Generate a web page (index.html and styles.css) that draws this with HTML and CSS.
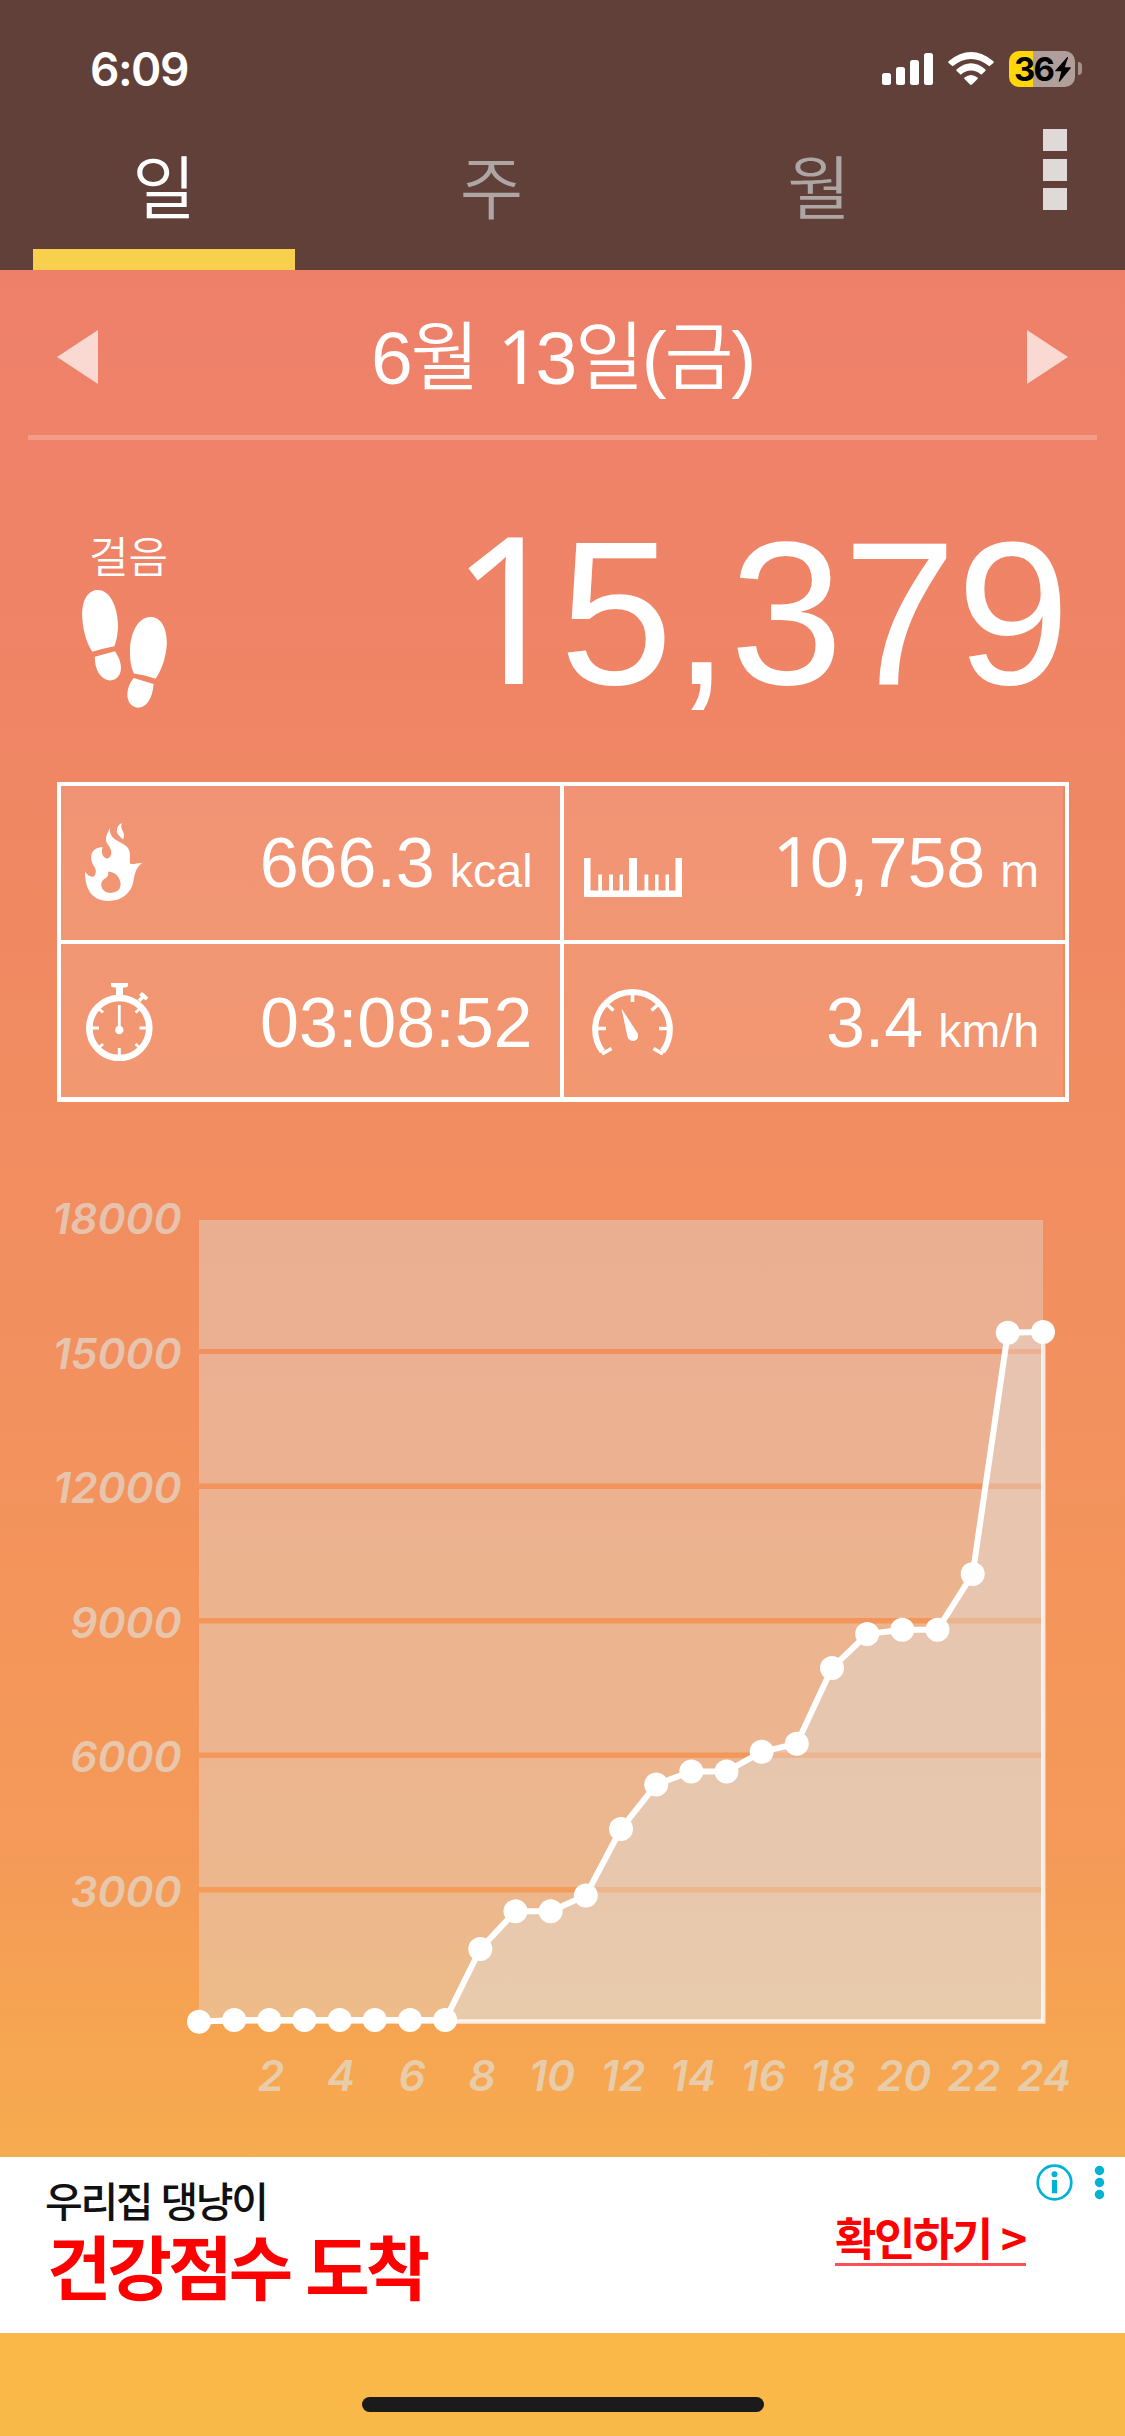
FILE: index.html
```html
<!DOCTYPE html>
<html lang="ko">
<head>
<meta charset="utf-8">
<title>만보기</title>
<link rel="stylesheet" href="styles.css">
</head>
<body>
<div class="app">
  <header class="header">
    <div class="status">
      <span class="clock">6:09</span>
      <div class="status-icons">
        <svg class="signal" viewBox="0 0 51 32"><rect x="0" y="20" width="9" height="12" rx="2.5"/><rect x="14" y="14" width="9" height="18" rx="2.5"/><rect x="28" y="7" width="9" height="25" rx="2.5"/><rect x="42" y="0" width="9" height="32" rx="2.5"/></svg>
        <svg class="wifi" viewBox="0 0 46 33"><path d="M0.6 9.2Q-.2 10 .6 10.900L4.600 14.300Q23 -.500 41.400 14.300L45.400 10.900Q46.200 10 45.400 9.200Q23 -9 .6 9.200Z"/><path d="M8.500 17.500Q8 18.200 8.700 18.900L12.700 22.700Q23 14.500 33.300 22.700L37.300 18.900Q38 18.200 37.500 17.500Q23 5 8.500 17.500Z"/><path d="M16.500 25.600Q23 20.500 29.500 25.600Q30.200 26.300 29.500 27L24 32.400Q23 33.200 22 32.400L16.500 27Q15.800 26.300 16.500 25.600Z"/></svg>
        <div class="battery"><span class="battery-level">36</span><svg class="bolt" viewBox="0 0 16 25"><path d="M12.300 0L.3 13.400Q-.2 14.300.8 14.300H6.400L3.700 24.300Q4 25.200 4.900 24.500L15.700 11.200Q16.200 10.200 15.200 10.200H9.700L13.100.6Q13 -.4 12.300 0Z"/></svg></div>
        <i class="battery-cap"></i>
      </div>
    </div>
    <nav class="tabs">
      <a class="tab active">일</a><a class="tab">주</a><a class="tab">월</a>
      <div class="menu"><i></i><i></i><i></i></div>
    </nav>
  </header>

  <section class="date-bar">
    <svg class="arrow" viewBox="0 0 41 54"><path d="M0 27L41 0V54Z"/></svg>
    <h1 class="date">6월 <span class="one">1</span>3일(금)</h1>
    <svg class="arrow" viewBox="0 0 41 54"><path d="M41 27L0 0V54Z"/></svg>
  </section>

  <section class="steps">
    <div class="steps-label">
      <span>걸음</span>
      <svg class="feet" viewBox="126 270 255 355"><path d="M157 456C137 428 126 380 126 340C127 292 148 270 173 270C212 270 234 325 234 378C233 405 229 424 223 439Q190 445 157 456ZM164 471L225 454C237 472 243 488 243 505C242 528 229 542 210 542C181 540 164 510 164 471ZM282 521C272 500 270 480 270 455C270 397 296 351 331 351C363 351 381 382 381 430C378 475 365 512 347 537Q314 525 282 521ZM281 535L341 553C338 596 320 624 294 624C273 622 262 606 262 583C263 563 270 549 281 535Z"/></svg>
    </div>
    <strong class="steps-count"><span class="one">1</span>5,379</strong>
  </section>

  <section class="stats">
    <div class="stat">
      <svg class="flame" viewBox="131 160 165 233" preserveAspectRatio="none"><path fill-rule="evenodd" d="M203 176C201 207 224 211 246 226C267 240 260 262 261 281C273 286 283 277 296 280C279 292 275 310 271 335C264 372 236 393 199 393C157 393 131 366 131 305C139 318 153 327 160 315C170 292 148 290 149 260C150 242 165 233 182 232C176 252 184 267 198 266C213 257 207 237 198 226C185 209 195 193 203 176ZM198 305C202 330 178 322 178 346C180 362 192 369 206 369C224 368 235 358 234 341C232 321 219 307 198 305Z"/><path d="M238 160C229 181 252 187 241 209C231 199 223 193 223 183C223 173 229 164 238 160Z"/></svg>
      <p class="value">666.3<small>kcal</small></p>
    </div>
    <div class="stat right">
      <svg class="ruler" viewBox="0 0 98 39"><path d="M0 0H6.500V32.500H14.300V16.500H18V32.500H25V16.500H29V32.500H35.500V16.500H39V32.500H45V0H53V32.500H60.500V16.500H64.300V32.500H71V16.500H74.500V32.500H81.500V16.500H85V32.500H91.500V0H98V39H0Z"/></svg>
      <p class="value"><span class="one">1</span>0,758<small>m</small></p>
    </div>
    <div class="stat lower">
      <svg class="watch" viewBox="0 0 68 78"><g fill="none" stroke="#fff"><circle cx="34.300" cy="45" r="30" stroke-width="6.600"/><path stroke-width="3" d="M7 45H14M54.500 45H61M34.300 72V65M13.500 65L18 61M55 65L50.500 61M13.500 25.500L18 29.500M55 25.500L50.500 29.500"/><path stroke-width="2.800" d="M34.300 22V46"/><path stroke-width="3.500" d="M54 18L60 11.500"/><path stroke-width="4" d="M55.500 10.500L62 16"/></g><circle cx="34.300" cy="47" r="4.200"/><path d="M26 0H43V3Q42 4.600 38 4.600V14H31V4.600Q27 4.600 26 3Z"/></svg>
      <p class="value">03:08:52</p>
    </div>
    <div class="stat lower right">
      <svg class="gauge" viewBox="0 0 81 68"><g fill="none" stroke="#fff"><path stroke-width="6" d="M10.500 63.500A37.300 37.300 0 1 1 70.500 63.500"/><path stroke-width="3.600" d="M40.500 4V14M5 40.500H14M76 40.500H67M15 16.500L21.500 22.500M66 16.500L59.500 22.500M10 66L19.500 60.500M71 66L61.500 60.500"/></g><path d="M29.500 20.500L45.800 45.500Q47 51.500 42 53Q37.500 53.500 35.500 49Z"/></svg>
      <p class="value">3.4<small>km/h</small></p>
    </div>
  </section>

  <svg class="chart" viewBox="0 1180 1125 960">
    <path class="plot" d="M199 1220H1043V1349H199ZM199 1354H1043V1483.500H199ZM199 1489H1043V1618H199ZM199 1623.500H1043V1752.500H199ZM199 1758H1043V1887H199ZM199 1892.500H1043V2022H199Z"/>
    <path class="plot" d="M199 2021.700L234.200 2020L445.200 2020L480.300 1949L515.500 1911.300L550.700 1911.300L585.800 1895.500L621 1829L656.200 1784.500L691.300 1771.500L726.500 1771.500L761.700 1751.800L796.800 1743.700L832 1668L867.200 1634L902.300 1629.700L937.500 1629.700L972.700 1574L1007.800 1332.700L1043 1332V2022H199Z"/>
    <path class="edge" d="M199 2021.500H1043.200V1332"/>
    <g class="labels y">
      <text x="181.500" y="1234">18000</text><text x="181.500" y="1369">15000</text><text x="181.500" y="1503">12000</text><text x="181.500" y="1638">9000</text><text x="181.500" y="1772">6000</text><text x="181.500" y="1907">3000</text>
    </g>
    <g class="labels x">
      <text x="271" y="2091">2</text><text x="341" y="2091">4</text><text x="412" y="2091">6</text><text x="482" y="2091">8</text><text x="552" y="2091">10</text><text x="623" y="2091">12</text><text x="693" y="2091">14</text><text x="763" y="2091">16</text><text x="833" y="2091">18</text><text x="904" y="2091">20</text><text x="974" y="2091">22</text><text x="1044" y="2091">24</text>
    </g>
    <polyline class="line" points="199,2021.700 234.200,2020 445.200,2020 480.300,1949 515.500,1911.300 550.700,1911.300 585.800,1895.500 621,1829 656.200,1784.500 691.300,1771.500 726.500,1771.500 761.700,1751.800 796.800,1743.700 832,1668 867.200,1634 902.300,1629.700 937.500,1629.700 972.700,1574 1007.800,1332.700 1043,1332"/>
    <g class="dots"><circle cx="199" cy="2021.700" r="12"/><circle cx="234.200" cy="2020" r="12"/><circle cx="269.300" cy="2020" r="12"/><circle cx="304.500" cy="2020" r="12"/><circle cx="339.700" cy="2020" r="12"/><circle cx="374.800" cy="2020" r="12"/><circle cx="410" cy="2020" r="12"/><circle cx="445.200" cy="2020" r="12"/><circle cx="480.300" cy="1949" r="12"/><circle cx="515.500" cy="1911.300" r="12"/><circle cx="550.700" cy="1911.300" r="12"/><circle cx="585.800" cy="1895.500" r="12"/><circle cx="621" cy="1829" r="12"/><circle cx="656.200" cy="1784.500" r="12"/><circle cx="691.300" cy="1771.500" r="12"/><circle cx="726.500" cy="1771.500" r="12"/><circle cx="761.700" cy="1751.800" r="12"/><circle cx="796.800" cy="1743.700" r="12"/><circle cx="832" cy="1668" r="12"/><circle cx="867.200" cy="1634" r="12"/><circle cx="902.300" cy="1629.700" r="12"/><circle cx="937.500" cy="1629.700" r="12"/><circle cx="972.700" cy="1574" r="12"/><circle cx="1007.800" cy="1332.700" r="12"/><circle cx="1043" cy="1332" r="12"/></g>
  </svg>

  <aside class="ad">
    <div class="ad-copy"><span class="ad-small">우리집 댕냥이</span><span class="ad-big">건강점수 도착</span></div>
    <span class="ad-cta">확인하기 &gt;</span>
    <svg class="ad-badge" viewBox="0 0 72 38"><circle cx="18.500" cy="18.500" r="16.800" fill="none" stroke="#00b2d3" stroke-width="2.700"/><circle cx="18.500" cy="10.200" r="3"/><path d="M15.900 16H21.100V29.300H15.900Z"/><circle cx="63.500" cy="6.500" r="4.700"/><circle cx="63.500" cy="18.500" r="4.700"/><circle cx="63.500" cy="30.500" r="4.700"/></svg>
  </aside>
  <footer class="footer"><i class="home"></i></footer>
</div>
</body>
</html>
```
FILE: styles.css
```css
* { box-sizing: border-box; margin: 0; padding: 0; }
body { width: 1125px; height: 2436px; overflow: hidden; color: #fff; font-family: "Liberation Sans", "Noto Sans CJK KR", sans-serif; }
svg { display: block; fill: #fff; }
.app {
  display: flex; flex-direction: column; height: 2436px;
  background: linear-gradient(#ee7f6a 0, #ee806a 270px, #ef8466 630px, #f18c60 1100px, #f2905f 1350px, #f4955b 1600px, #f49a59 1860px, #f6a351 2010px, #f7ab50 2150px, #f9b847 2335px, #f9b948 2436px);
}
/* footless figure one */
.one { font-family: "Noto Sans", sans-serif; font-weight: 400; line-height: 0; margin: 0 -.036em 0 .02em; }
.header { height: 270px; background: #604038; }
.status { height: 110px; padding: 50px 43px 0 90px; display: flex; justify-content: space-between; align-items: flex-start; }
.clock { font: 600 46px/38px Inter, sans-serif; letter-spacing: -1.500px; }
.status-icons { display: flex; align-items: flex-start; }
.signal { width: 51px; height: 32px; margin-top: 3px; }
.wifi { width: 46px; height: 33px; margin: 2px 15px 0; }
.battery { width: 66px; height: 36px; margin-top: 1px; border-radius: 10px; background: linear-gradient(90deg, #ffd60a 24px, #b09f9b 24px); display: flex; align-items: center; padding-left: 5px; color: #000; }
.battery-level { font: 700 33px/36px Inter, sans-serif; letter-spacing: -1.700px; width: 41px; }
.bolt { width: 16px; height: 25px; fill: #000; }
.battery-cap { width: 4px; height: 13px; margin: 12px 0 0 3px; border-radius: 0 4px 4px 0; background: #a3918d; }
.tabs { height: 160px; padding-left: 33px; display: flex; }
.tab { width: 262px; margin-right: 65.500px; height: 160px; padding-top: 22px; text-align: center; font: 350 69px/104px "Noto Sans CJK KR", sans-serif; color: #ada6a4; }
.tab.active { color: #fff; border-bottom: 21px solid #f8d04e; }
.menu { margin: 19px 0 0 27px; display: flex; flex-direction: column; gap: 7.500px; }
.menu i { width: 24px; height: 22px; background: #dfd9d7; }
.date-bar { height: 170px; margin: 0 28px; padding: 8px 29px 0; border-bottom: 5px solid #f39c88; display: flex; align-items: center; justify-content: space-between; }
.arrow { width: 41px; height: 54px; opacity: .7; }
.date { font-weight: 350; font-size: 75px; line-height: 100px; letter-spacing: -2.200px; white-space: nowrap; padding-top: 2px; }
.steps { height: 342px; padding: 90px 55px 0 82px; display: flex; justify-content: space-between; }
.steps-label { width: 95px; }
.steps-label span { display: block; height: 60px; padding-left: 7px; font: 350 43px/49px "Noto Sans CJK KR", sans-serif; white-space: nowrap; }
.feet { width: 85px; height: 118px; }
.steps-count { font-weight: 400; font-size: 204px; line-height: 166px; white-space: nowrap; }
.stats { width: 1012px; height: 320px; margin-left: 56.500px; border: solid #fff; border-width: 4px 4.500px 5px; display: grid; grid-template-columns: 499px 499px; grid-template-rows: 154px 153px; gap: 4px 4.500px; background: linear-gradient(90deg, transparent 499px, #fff 499px 503.500px, transparent 503.500px), linear-gradient(transparent 154px, #fff 154px 158px, transparent 158px); }
.stat { background: rgba(255,255,255,.11); display: flex; align-items: flex-start; justify-content: space-between; padding: 0 27px 0 24px; }
.stat.right { padding: 0 24px 0 20px; }
.value { font-size: 70px; line-height: 80px; padding-top: 37px; white-space: nowrap; }
.lower .value { padding-top: 39px; }
.value small { font-size: 46.500px; margin-left: 15px; }
.flame { width: 57px; height: 78px; margin-top: 37px; }
.ruler { width: 98px; height: 39px; margin-top: 72px; }
.watch { width: 68px; height: 78px; margin-top: 39px; }
.gauge { width: 81px; height: 68px; margin: 44px 0 0 8px; }
.chart { width: 1125px; height: 960px; margin-top: 78px; margin-bottom: 17px; flex: none; }
.plot { fill: rgba(225,226,222,.4); }
.edge { fill: none; stroke: rgba(255,255,255,.78); stroke-width: 4.500; }
.line { fill: none; stroke: #fff; stroke-width: 6; }
.labels { font: italic 600 42.500px Inter, sans-serif; fill: rgba(226,224,216,.67); }
.labels.y { text-anchor: end; }
.labels.x { text-anchor: middle; }
.ad { height: 176px; background: #fff; display: flex; font-family: "Noto Sans CJK KR", sans-serif; position: relative; }
.ad-copy { width: 835px; padding: 14px 0 0 45px; display: flex; flex-direction: column; }
.ad-small { color: #111; font-weight: 500; font-size: 41px; line-height: 56px; letter-spacing: -2.300px; white-space: nowrap; }
.ad-big { padding-left: 2px; color: #f00; font-weight: 700; font-size: 70px; line-height: 76px; letter-spacing: -3.800px; white-space: nowrap; }
.ad-cta { align-self: flex-start; margin-top: 52px; width: 191px; height: 57px; color: #f00; font-weight: 700; font-size: 45px; line-height: 55px; letter-spacing: -2.500px; white-space: nowrap; border-bottom: 3px solid #ff5058; }
.ad-badge { position: absolute; left: 1036px; top: 7px; width: 72px; height: 38px; fill: #00b2d3; }
.footer { flex: 1; display: flex; justify-content: center; align-items: flex-start; padding-top: 64px; }
.home { width: 402px; height: 15px; border-radius: 8px; background: #1b1b1b; }
```
